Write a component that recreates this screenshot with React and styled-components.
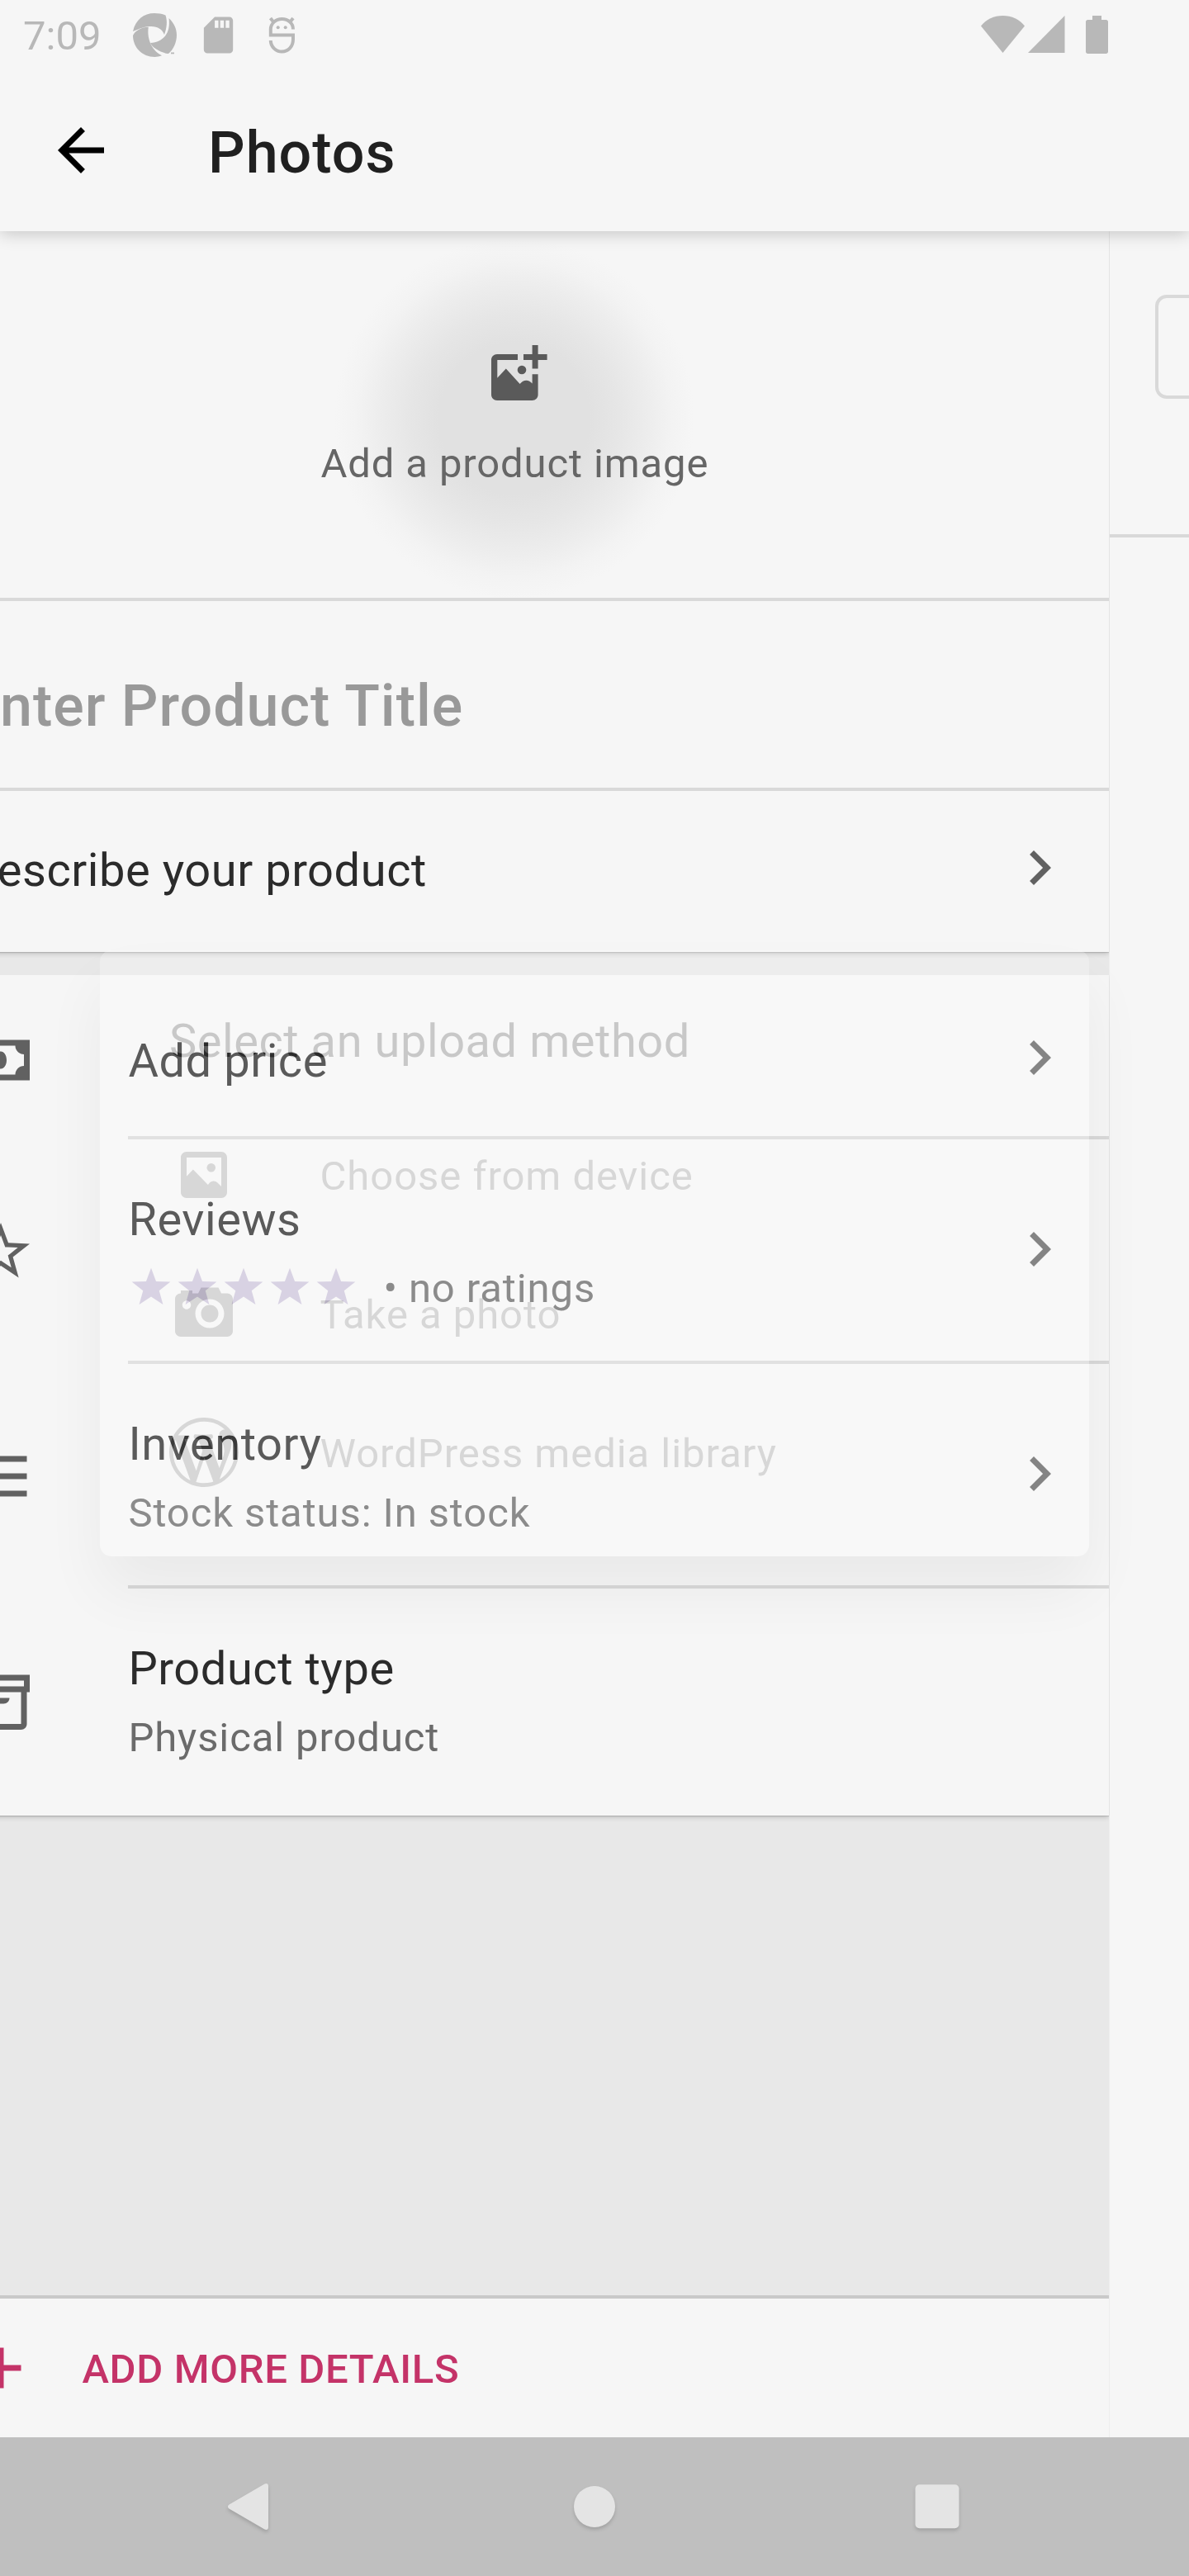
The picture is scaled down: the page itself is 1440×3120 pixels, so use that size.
import React from "react";
import styled, { createGlobalStyle } from "styled-components";

const GlobalStyle = createGlobalStyle`
  *, *::before, *::after { box-sizing: border-box; }
  html, body { margin: 0; padding: 0; background: #f6f6f6; }
  body { font-family: Roboto, "Liberation Sans", sans-serif; }
  svg { display: block; flex: none; }
`;

const INK = "#2b2b2b";
const MUTED = "#6b6b6b";
const ICON = "#616161";
const LINE = "#d9d9d9";
const SURFACE = "#f6f6f6";

const Screen = styled.div`
  position: relative;
  display: flex;
  flex-direction: column;
  width: 1440px;
  height: 3120px;
  overflow: hidden;
  background: ${SURFACE};
`;

const Header = styled.header`
  position: relative;
  z-index: 2;
  flex: none;
  background: ${SURFACE};
  box-shadow: 0 2px 20px rgba(0, 0, 0, 0.22);
`;

const StatusBar = styled.div`
  display: flex;
  align-items: center;
  height: 84px;
  padding: 0 98px 0 28px;
  color: #b8b8b8;
`;

const Clock = styled.span`
  width: 133px;
  padding-top: 4px;
  font-size: 49px;
  line-height: 66px;
`;

const Notifications = styled.div`
  display: flex;
  align-items: center;
  gap: 24px;
`;

const DebugIcon = styled.svg`
  margin-left: 10px;
`;

const SystemIcons = styled.div`
  display: flex;
  align-items: center;
  margin-left: auto;
`;

const BatteryIcon = styled.svg`
  margin-left: 25px;
`;

const Toolbar = styled.div`
  display: flex;
  align-items: center;
  gap: 112px;
  height: 196px;
  padding-left: 56px;
`;

const Title = styled.h1`
  margin: 0;
  padding-top: 6px;
  font-size: 70px;
  line-height: 82px;
  font-weight: 500;
  letter-spacing: 0.0143em;
  color: #202020;
`;

const Pager = styled.main`
  display: flex;
  flex: 1;
  min-height: 0;
  overflow: hidden;
`;

const Page = styled.section`
  display: flex;
  flex-direction: column;
  flex: none;
  width: 1440px;
  margin-left: ${(p) => (p.$shifted ? "-96.6px" : "0")};
  background: ${(p) => (p.$shifted ? "#e8e8e8" : SURFACE)};
  box-shadow: ${(p) => (p.$shifted ? "1px 0 0 #eeeeee" : "none")};
  position: relative;
  z-index: ${(p) => (p.$shifted ? 1 : 0)};
`;

const Card = styled.div`
  flex: none;
  background: ${SURFACE};
  margin-bottom: ${(p) => p.$gap || 0}px;
  clip-path: inset(0 0 -12px 0);
  box-shadow: 0 2px 6px rgba(0, 0, 0, 0.18), 0 1px 1px rgba(0, 0, 0, 0.12);
`;

const ImagePicker = styled.div`
  display: flex;
  flex-direction: column;
  align-items: center;
  gap: 34px;
  height: 448px;
  padding-top: 131px;
  border-bottom: 4px solid ${LINE};
  background: radial-gradient(
    circle 218px at 720px 227px,
    #e1e1e1 0,
    #e1e1e1 42%,
    #e6e6e6 58%,
    #ededed 75%,
    #f3f3f3 88%,
    ${SURFACE} 100%
  );
`;

const PickerLabel = styled.span`
  font-size: 49px;
  line-height: 66px;
  letter-spacing: 0.01786em;
  color: #666666;
`;

const TitleField = styled.div`
  height: 230px;
  padding: 86px 56px 0;
  border-bottom: 4px solid ${LINE};
  font-size: 70px;
  line-height: 82px;
  font-weight: 500;
  letter-spacing: 0.0143em;
  white-space: nowrap;
  color: #999999;
`;

const DescribeRow = styled.div`
  display: flex;
  justify-content: space-between;
  align-items: flex-start;
  height: 195px;
  padding: 51px 42px 0 56px;
`;

const Primary = styled.div`
  padding-top: ${(p) => p.$drop || 0}px;
  font-size: 56px;
  line-height: 76px;
  letter-spacing: 0.0098em;
  white-space: nowrap;
  color: ${INK};
`;

const Secondary = styled.div`
  display: flex;
  margin-top: 13px;
  font-size: 49px;
  line-height: 66px;
  letter-spacing: 0.0182em;
  white-space: nowrap;
  color: ${MUTED};
`;

const Row = styled.div`
  display: flex;
  height: ${(p) => p.$height}px;
`;

const RowIcon = styled.div`
  flex: none;
  width: 252px;
  padding: ${(p) => p.$top}px 0 0 56px;
  color: ${ICON};
`;

const RowBody = styled.div`
  display: flex;
  justify-content: space-between;
  align-items: flex-start;
  flex: 1;
  padding-right: 42px;
  border-bottom: ${(p) => (p.$last ? 0 : 4)}px solid ${LINE};
`;

const RowText = styled.div`
  padding-top: ${(p) => p.$top}px;
`;

const RowChevron = styled.div`
  padding-top: ${(p) => p.$top}px;
`;

const Stars = styled.div`
  display: flex;
  margin-right: 29px;
  padding-top: 3px;
  color: #cec6dc;
`;

const Filler = styled.div`
  flex: 1;
`;

const AddMore = styled.div`
  display: flex;
  align-items: center;
  gap: 56px;
  flex: none;
  height: 172px;
  padding-left: 56px;
  border-top: 4px solid #c9c9c9;
  background: ${SURFACE};
  color: #c43368;
`;

const AddMoreLabel = styled.span`
  padding-top: 4px;
  font-size: 49px;
  line-height: 66px;
  font-weight: 500;
  letter-spacing: 0.0135em;
`;

const NextHeader = styled.div`
  height: 371px;
  padding: 77px 56px 0;
  border-bottom: 4px solid ${LINE};
`;

const NextThumb = styled.div`
  width: 126px;
  height: 126px;
  border: 4px solid ${LINE};
  border-radius: 14px;
`;

const NavBar = styled.nav`
  display: flex;
  align-items: center;
  justify-content: center;
  gap: 331px;
  flex: none;
  height: 168px;
  background: #bfbfbf;
  color: #e4e4e4;

  svg { filter: drop-shadow(0 3px 2px rgba(0, 0, 0, 0.15)); }
`;

const Dialog = styled.div`
  position: absolute;
  z-index: 3;
  left: 121px;
  top: 1151px;
  width: 1198px;
  height: 734px;
  padding: 72px 84px 0;
  border-radius: 14px;
  background: #ffffff;
  opacity: 0.22;
  box-shadow: 0 42px 76px rgba(0, 0, 0, 0.24);
`;

const DialogTitle = styled.div`
  height: 116px;
  font-size: 56px;
  line-height: 76px;
  letter-spacing: 0.0098em;
  color: #2b2b2b;
`;

const Option = styled.div`
  display: flex;
  align-items: center;
  gap: 98.5px;
  height: 168px;
  color: #6b6b6b;
`;

const OptionLabel = styled.span`
  padding-top: 4px;
  font-size: 49px;
  line-height: 66px;
  letter-spacing: 0.0195em;
`;

const Glyph = ({ size = 84, children }) => (
  <svg width={size} height={size} viewBox="0 0 24 24" fill="currentColor">
    {children}
  </svg>
);

const Chevron = () => (
  <svg width="84" height="84" viewBox="0 0 24 24" fill={ICON}>
    <path d="M10 6L8.59 7.41 13.17 12l-4.58 4.59L10 18l6-6z" />
  </svg>
);

const Star = () => (
  <Glyph size={56}>
    <path d="M12 2l2.582 6.953L22 9.257l-5.822 4.602L18.18 21 12 16.89 5.82 21l2.002-7.14L2 9.256l7.418-.304L12 2z" />
  </Glyph>
);

const MoneyIcon = () => (
  <Glyph>
    <path d="M2 5v14h20V5H2zm5 12c0-1.657-1.343-3-3-3v-4c1.657 0 3-1.343 3-3h10c0 1.657 1.343 3 3 3v4c-1.657 0-3 1.343-3 3H7zm5-8c1.1 0 2 1.3 2 3s-.9 3-2 3-2-1.3-2-3 .9-3 2-3z" />
  </Glyph>
);

const StarOutlineIcon = () => (
  <Glyph>
    <path d="M12 6.308l1.176 3.167.347.936.997.042 3.374.14-2.647 2.09-.784.62.27.963.91 3.25-2.813-1.872-.83-.553-.83.552-2.814 1.87.91-3.248.27-.962-.783-.62-2.648-2.092 3.374-.14.996-.04.347-.936L12 6.308M12 2L9.418 8.953 2 9.257l5.822 4.602L5.82 21 12 16.89 18.18 21l-2.002-7.14L22 9.256l-7.418-.305L12 2z" />
  </Glyph>
);

const ListIcon = () => (
  <Glyph>
    <path d="M9 19h12v-2H9v2zm0-6h12v-2H9v2zm0-8v2h12V5H9zM3 5h3v2H3zm0 6h3v2H3zm0 6h3v2H3z" />
  </Glyph>
);

const ArchiveIcon = () => (
  <Glyph>
    <path
      fillRule="evenodd"
      d="M22 3H2v6h1v11c0 1.1.9 2 2 2h14c1.1 0 2-.9 2-2V9h1V3zM4 5h16v2H4V5zm15 15H5V9h14v11zM9 11h6c0 1.1-.9 2-2 2h-2c-1.1 0-2-.9-2-2z"
    />
  </Glyph>
);

const AddImageIcon = () => (
  <svg width="84" height="84" viewBox="0 0 84 84" fill="#5a5a5a">
    <path d="M46 18H21c-3.900 0-7 3.100-7 7v42c0 3.900 3.100 7 7 7h42.600c3.900 0 7-3.100 7-7V42.300h-7V53.500c-4-5-10.500-5.200-15 .5L31.800 35.500 21.300 46.700V25H46z" />
    <circle cx="51" cy="37" r="5.300" />
    <path d="M63.600 7h7v11h11v7h-11v10.500h-7V25H53v-7h10.600z" />
  </svg>
);

const ImageIcon = () => (
  <Glyph>
    <path
      fillRule="evenodd"
      d="M20 6v12c0 1.100-.9 2-2 2H6c-1.100 0-2-.9-2-2V6c0-1.100.9-2 2-2h12c1.100 0 2 .9 2 2zM6 6v6.500l2.250-2.350 5.150 5.250.5-.6c.8-.9 2-.9 2.800-.1L18 16V6H6z"
    />
    <circle cx="14.500" cy="9.500" r="1.500" />
  </Glyph>
);

const CameraIcon = () => (
  <Glyph>
    <path d="M17 12c0 1.700-1.300 3-3 3s-3-1.300-3-3 1.300-3 3-3 3 1.300 3 3zm5-5v11c0 1.100-.9 2-2 2H4c-1.100 0-2-.9-2-2V7c0-1.100.9-2 2-2V4h4v1h2l1-2h6l1 2h2c1.100 0 2 .9 2 2zM7.500 9c0-.8-.7-1.500-1.500-1.500S4.500 8.200 4.500 9s.7 1.500 1.500 1.500S7.500 9.800 7.500 9zM19 12c0-2.800-2.200-5-5-5s-5 2.200-5 5 2.200 5 5 5 5-2.200 5-5z" />
  </Glyph>
);

const WordPressIcon = () => (
  <svg width="84" height="84" viewBox="0 0 20 20" fill="currentColor">
    <path d="M20 10c0-5.510-4.490-10-10-10C4.480 0 0 4.490 0 10c0 5.520 4.480 10 10 10 5.510 0 10-4.480 10-10zM7.780 15.370L4.370 6.220c.55-.02 1.170-.08 1.170-.08.5-.06.44-1.130-.06-1.110 0 0-1.450.11-2.370.11-.18 0-.37 0-.58-.01C4.120 2.690 6.870 1.110 10 1.110c2.330 0 4.450.87 6.050 2.340-.68-.11-1.650.39-1.650 1.580 0 .74.45 1.360.9 2.100.35.61.55 1.360.55 2.460 0 1.490-1.400 5-1.400 5l-3.030-8.370c.54-.02.82-.17.82-.17.5-.05.44-1.250-.06-1.220 0 0-1.440.12-2.380.12-.87 0-2.330-.12-2.330-.12-.5-.03-.56 1.200-.06 1.220l.92.08 1.260 3.410zM17.410 10c.24-.64.74-1.870.43-4.250.7 1.290 1.050 2.710 1.050 4.250 0 3.290-1.730 6.240-4.400 7.780.97-2.590 1.940-5.200 2.920-7.780zM6.100 18.090C3.120 16.650 1.110 13.530 1.110 10c0-1.300.23-2.480.72-3.590C3.250 10.300 4.670 14.200 6.100 18.090zm4.030-6.630l2.580 6.980c-.86.29-1.760.45-2.710.45-.79 0-1.570-.11-2.290-.33.81-2.380 1.620-4.740 2.420-7.100z" />
  </svg>
);

const detailRows = [
  { title: "Reviews", Icon: StarOutlineIcon, rating: "• no ratings", chevron: true },
  { title: "Inventory", Icon: ListIcon, note: "Stock status: In stock", chevron: true },
  { title: "Product type", Icon: ArchiveIcon, note: "Physical product" },
];

const uploadOptions = [
  { label: "Choose from device", Icon: ImageIcon },
  { label: "Take a photo", Icon: CameraIcon },
  { label: "WordPress media library", Icon: WordPressIcon },
];

export default function App() {
  return (
    <>
      <GlobalStyle />
      <Screen>
        <Header>
          <StatusBar>
            <Clock>7:09</Clock>
            <Notifications>
              <svg width="53" height="53" viewBox="0 0 53 53" fill="currentColor">
                <path d="M0 22C3 8 13 0 26 0c5 0 9 .7 13.500 2.500C42 10 41 18 38 26 34 15 21 12 0 22z" />
                <path d="M43.500 6C50 12 53 19 53 26.500c0 9-4 17.500-10 22.500l-3-.3C31 46 24 42 21 36 37 35 46 24 43.500 6z" />
                <path d="M0 27c3-6 10-10 18.800-10.200C17 29 21 44 35 51.300 32 52.500 29 53 26.500 53 11 53 0 41 0 27z" />
                <path d="M46 47.500h4v1.800h-4z" />
              </svg>
              <Glyph size={53}>
                <path d="M18 2h-8L4.020 8 4 20c0 1.100.9 2 2 2h12c1.100 0 2-.9 2-2V4c0-1.100-.9-2-2-2zm-6 6h-2V4h2v4zm3 0h-2V4h2v4zm3 0h-2V4h2v4z" />
              </Glyph>
              <DebugIcon width="32" height="45" viewBox="0 0 32 45" fill="none" stroke="currentColor" strokeWidth="4">
                <path d="M30 15.500C30 8 24 3 16.500 3S2.800 8.500 2.800 15.500V22.500H30v5C30 36.500 24 42.500 16.500 42.500S2.800 36.500 2.800 29" />
                <path d="M2.500 2l4 5M30 2l-4 5" />
                <circle cx="11.700" cy="13.300" r="2" fill="currentColor" stroke="none" />
                <circle cx="20.700" cy="13.300" r="2" fill="currentColor" stroke="none" />
              </DebugIcon>
            </Notifications>
            <SystemIcons>
              <svg width="57" height="46" viewBox="0 0 57 46" fill="currentColor">
                <path d="M0 12.500C6 4.500 16 0 26.500 0S47 4.500 53 12.500L26.500 45z" />
              </svg>
              <svg width="45" height="46" viewBox="0 0 45 46" fill="currentColor">
                <path d="M0 45L44.500 0v45z" />
              </svg>
              <BatteryIcon width="27" height="46" viewBox="0 0 27 46" fill="currentColor">
                <path d="M8 0h11v5h5.500C26 5 27 6 27 7.500v36c0 1.500-1 2.500-2.500 2.500h-22C1 46 0 45 0 43.500v-36C0 6 1 5 2.500 5H8z" />
              </BatteryIcon>
            </SystemIcons>
          </StatusBar>
          <Toolbar>
            <svg width="84" height="84" viewBox="0 0 24 24" fill="#000000">
              <path d="M20 11H7.830l5.590-5.590L12 4l-8 8 8 8 1.410-1.410L7.830 13H20v-2z" />
            </svg>
            <Title>Photos</Title>
          </Toolbar>
        </Header>

        <Pager>
          <Page $shifted>
            <Card $gap={28}>
              <ImagePicker>
                <AddImageIcon />
                <PickerLabel>Add a product image</PickerLabel>
              </ImagePicker>
              <TitleField>Enter Product Title</TitleField>
              <DescribeRow>
                <Primary $drop={7}>Describe your product</Primary>
                <Chevron />
              </DescribeRow>
            </Card>

            <Card>
              <Row $height={199}>
                <RowIcon $top={61}>
                  <MoneyIcon />
                </RowIcon>
                <RowBody>
                  <RowText $top={66}>
                    <Primary>Add price</Primary>
                  </RowText>
                  <RowChevron $top={58}>
                    <Chevron />
                  </RowChevron>
                </RowBody>
              </Row>
              {detailRows.map(({ title, Icon, rating, note, chevron }, i) => {
                const last = i === detailRows.length - 1;
                return (
                  <Row key={title} $height={last ? 275 : 272}>
                    <RowIcon $top={94}>
                      <Icon />
                    </RowIcon>
                    <RowBody $last={last}>
                      <RowText $top={59}>
                        <Primary>{title}</Primary>
                        <Secondary>
                          {rating && (
                            <Stars>
                              {[0, 1, 2, 3, 4].map((n) => (
                                <Star key={n} />
                              ))}
                            </Stars>
                          )}
                          {rating || note}
                        </Secondary>
                      </RowText>
                      {chevron && (
                        <RowChevron $top={91}>
                          <Chevron />
                        </RowChevron>
                      )}
                    </RowBody>
                  </Row>
                );
              })}
            </Card>

            <Filler />

            <AddMore>
              <Glyph>
                <path d="M19 13h-6v6h-2v-6H5v-2h6V5h2v6h6v2z" />
              </Glyph>
              <AddMoreLabel>ADD MORE DETAILS</AddMoreLabel>
            </AddMore>
          </Page>

          <Page>
            <NextHeader>
              <NextThumb />
            </NextHeader>
          </Page>
        </Pager>

        <NavBar>
          <svg width="84" height="84" viewBox="0 0 84 84" fill="currentColor">
            <path d="M14.500 39.500L57 14.800c2.500-1.500 5-.8 5 2.200v50c0 3-2.500 3.700-5 2.200L14.500 44.500c-2-1.300-2-3.700 0-5z" />
          </svg>
          <svg width="84" height="84" viewBox="0 0 84 84" fill="currentColor">
            <circle cx="42" cy="42" r="25" />
          </svg>
          <svg width="84" height="84" viewBox="0 0 84 84" fill="currentColor">
            <rect x="15.500" y="15.300" width="53" height="53" rx="5" />
          </svg>
        </NavBar>

        <Dialog>
          <DialogTitle>Select an upload method</DialogTitle>
          {uploadOptions.map(({ label, Icon }) => (
            <Option key={label}>
              <Icon />
              <OptionLabel>{label}</OptionLabel>
            </Option>
          ))}
        </Dialog>
      </Screen>
    </>
  );
}
